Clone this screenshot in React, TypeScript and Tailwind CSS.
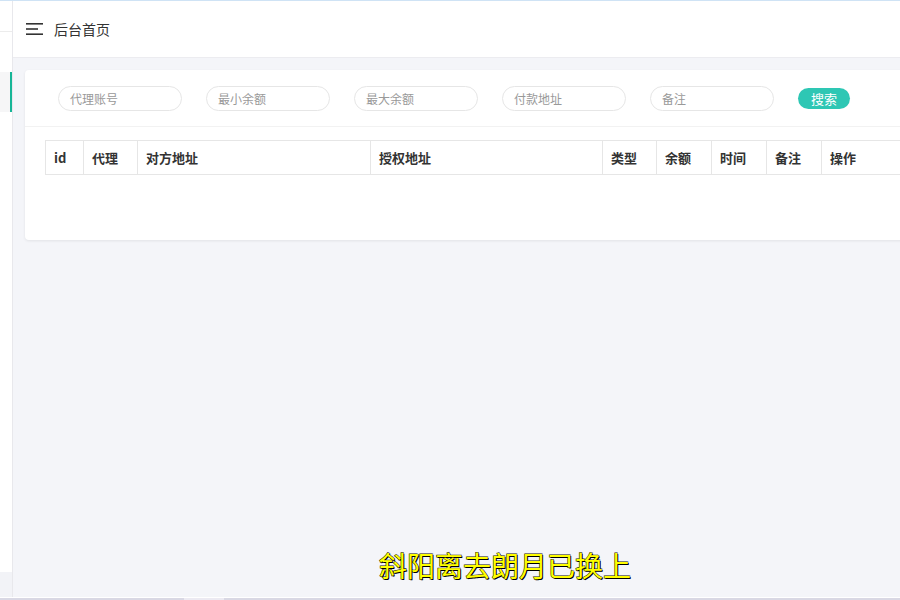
import React from "react"

const filters = ["代理账号", "最小余额", "最大余额", "付款地址", "备注"]

const columns = [
  { title: "id", w: "w-[38px]" },
  { title: "代理", w: "w-[54px]" },
  { title: "对方地址", w: "w-[233px]" },
  { title: "授权地址", w: "w-[232px]" },
  { title: "类型", w: "w-[54px]" },
  { title: "余额", w: "w-[55px]" },
  { title: "时间", w: "w-[55px]" },
  { title: "备注", w: "w-[55px]" },
  { title: "操作", w: "w-[120px]" },
]

function MenuIcon() {
  return (
    <svg width="18" height="12" viewBox="0 0 18 12" className="shrink-0">
      <rect x="0" y="0" width="17" height="1.6" fill="#333" />
      <rect x="0" y="5.2" width="12" height="1.6" fill="#333" />
      <rect x="0" y="10.4" width="17" height="1.6" fill="#333" />
    </svg>
  )
}

export default function App() {
  return (
    <div
      className="relative w-[900px] h-[600px] overflow-hidden bg-[#f4f5f9] flex flex-col"
      style={{ fontFamily: '"Noto Sans CJK SC", "Noto Sans", sans-serif' }}
    >
      <div className="h-px bg-[#cfe3f5] shrink-0" />
      <div className="flex flex-1 min-h-0">
        {/* sidebar */}
        <div className="w-[13px] shrink-0 flex flex-col border-r border-[#e8e8ec]">
          <div className="h-[571px] bg-white flex flex-col">
            <div className="h-[31px] border-b border-[#ececec]" />
            <div className="h-[40px]" />
            <div className="h-[40px] bg-[#f6f6f7] border-r-[2px] border-[#16b597]" />
          </div>
          <div className="flex-1 bg-[#f2f3f7]" />
        </div>

        {/* main */}
        <div className="flex-1 flex flex-col min-w-0">
          <div className="h-[57px] shrink-0 bg-white border-b border-[#ececf0] flex items-center pl-[13px] gap-[10px]">
            <MenuIcon />
            <span className="text-[14px] text-[#333]">后台首页</span>
          </div>

          <div className="flex-1 pt-[12px] pl-[12px]">
            <div className="w-[900px] h-[170px] bg-white rounded-[4px] shadow-[0_1px_3px_rgba(0,0,0,0.08)] flex flex-col">
              <div className="h-[57px] border-b border-[#f2f2f2] flex items-start pt-[16px] pl-[33px]">
                <div className="flex items-center gap-[24px]">
                  {filters.map((f) => (
                    <div
                      key={f}
                      className="w-[124px] h-[25px] rounded-full border border-[#e6e6e6] flex items-center pl-[11px] text-[12px] text-[#999]"
                    >
                      {f}
                    </div>
                  ))}
                  <div className="w-[52px] h-[21px] rounded-full bg-[#2ec7b4] text-white text-[13px] flex items-center justify-center">
                    搜索
                  </div>
                </div>
              </div>

              <div className="pt-[13px] pl-[20px]">
                <div className="flex border-y border-l border-[#e6e6e6] h-[35px] w-max">
                  {columns.map((c) => (
                    <div
                      key={c.title}
                      className={`${c.w} shrink-0 border-r border-[#e6e6e6] flex items-center pl-[8px] text-[13px] font-bold text-[#333]`}
                    >
                      {c.title}
                    </div>
                  ))}
                </div>
              </div>
            </div>
          </div>
        </div>
      </div>

      <div className="h-[3px] shrink-0 bg-[#d9d8e4] border-t border-white flex">
        <div className="w-[184px]" />
        <div className="w-[40px] bg-[#eceaf2]" />
      </div>

      <div className="absolute left-0 right-0 top-[551px] flex justify-center pl-[110px]">
        <span
          className="text-[28px] leading-none text-[#ffff00] [-webkit-text-stroke:1px_#111] [paint-order:stroke_fill]"
          style={{ fontFamily: '"Noto Sans CJK SC", sans-serif', textShadow: "1px 1px 0 #000" }}
        >
          斜阳离去朗月已换上
        </span>
      </div>
    </div>
  )
}
